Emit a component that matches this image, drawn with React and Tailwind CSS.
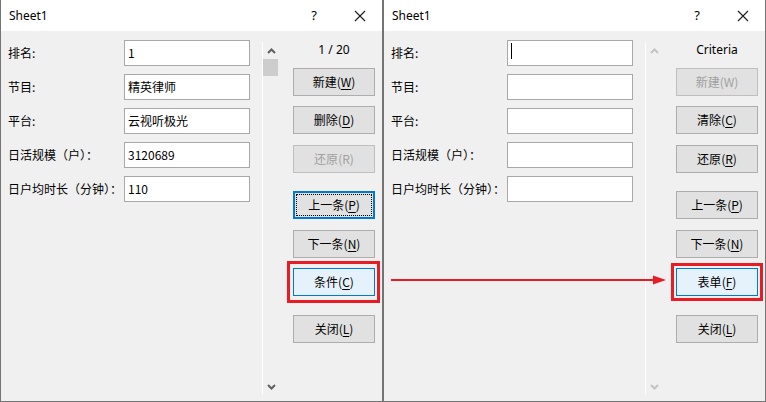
import React from "react";

const rows = [
    ["排名:", "1"],
    ["节目:", "精英律师"],
    ["平台:", "云视听极光"],
    ["日活规模（户）：", "3120689"],
    ["日户均时长（分钟）：", "110"],
];

function CloseIcon() {
    return (
        <svg width="12" height="12" viewBox="0 0 12 12">
            <path d="M1 1 L11 11 M11 1 L1 11" stroke="#1a1a1a" strokeWidth="1.1" fill="none" />
        </svg>
    );
}

function Chevron({ up, color }) {
    return (
        <svg width="9" height="6" viewBox="0 0 9 6">
            <path d={up ? "M1 5 L4.5 1.5 L8 5" : "M1 1 L4.5 4.5 L8 1"} stroke={color} strokeWidth="2" fill="none" />
        </svg>
    );
}

// one dialog button, kind = normal | disabled | focus | active
function Btn({ text, hot, kind = "normal", className = "" }) {
    let look = "border border-[#adadad] bg-[#e1e1e1] text-black";
    if (kind === "disabled") look = "border border-[#bfbfbf] bg-[#e1e1e1] text-[#a0a0a0]";
    if (kind === "focus") look = "border-2 border-[#0078d7] bg-[#e1e1e1] text-black";
    if (kind === "active") look = "border border-[#0078d7] bg-[#e5f1fb] text-black";
    return (
        <div className={"relative flex h-[28px] w-[82px] items-center justify-center text-[12px] " + look + " " + className}>
            {kind === "focus" && <span className="absolute inset-[1px] border border-dotted border-black" />}
            <span className="relative">
                {text}(
                {hot ? <span className={kind === "disabled" ? "" : "underline underline-offset-2"}>{hot}</span> : null})
            </span>
        </div>
    );
}

function Dialog({ criteria }) {
    return (
        <div className="flex h-[402px] flex-col border-x border-b border-[#747474] bg-[#f0f0f0] font-['Noto_Sans_CJK_SC',sans-serif]">
            {/* title bar */}
            <div className="flex h-[31px] items-center bg-white pl-[8px] text-[12px] text-black">
                <span className="font-['Noto_Sans','Noto_Sans_CJK_SC',sans-serif]">Sheet1</span>
                <span className="ml-auto mr-[37px] font-['Noto_Sans',sans-serif] text-[13px]">?</span>
                <span className="mr-[16px] flex items-center">
                    <CloseIcon />
                </span>
            </div>

            <div className="flex flex-1">
                {/* form */}
                <div className="flex w-[261px] flex-col gap-[8px] pt-[9px]">
                    {rows.map(([label, value], i) => (
                        <div key={label} className="flex h-[26px] items-center">
                            <div className="w-[123px] pl-[7px] text-[12px] text-black">{label}</div>
                            <div className="relative flex h-[26px] w-[126px] items-center border border-[#a8a8a8] bg-white pl-[3px] text-[12px] text-black">
                                {criteria ? "" : value}
                                {criteria && i === 0 && <span className="absolute left-[3px] top-[2px] h-[16px] w-px bg-black" />}
                            </div>
                        </div>
                    ))}
                </div>

                {/* scrollbar */}
                <div className="mb-[6px] mt-[11px] flex w-[17px] flex-col border-l border-white">
                    <div className="flex h-[17px] items-center justify-center">
                        <Chevron up color={criteria ? "#c4c4c4" : "#606060"} />
                    </div>
                    {!criteria && <div className="h-[17px] w-[15px] bg-[#cdcdcd]" />}
                    <div className="mt-auto flex h-[17px] items-center justify-center">
                        <Chevron color={criteria ? "#c4c4c4" : "#606060"} />
                    </div>
                </div>

                {/* buttons */}
                <div className="flex flex-col pl-[14px] pt-[11px]">
                    <div className="h-[16px] w-[82px] text-center font-['Noto_Sans','Noto_Sans_CJK_SC',sans-serif] text-[12px] leading-[16px] text-black">
                        {criteria ? "Criteria" : "1 / 20"}
                    </div>
                    <Btn text="新建" hot="W" kind={criteria ? "disabled" : "normal"} className="mt-[10px]" />
                    <Btn text={criteria ? "清除" : "删除"} hot={criteria ? "C" : "D"} className="mt-[10px]" />
                    <Btn text="还原" hot="R" kind={criteria ? "normal" : "disabled"} className="mt-[11px]" />
                    <Btn text="上一条" hot="P" kind={criteria ? "normal" : "focus"} className="mt-[18px]" />
                    <Btn text="下一条" hot="N" className="mt-[11px]" />
                    <div className="relative mt-[10px]">
                        <Btn text={criteria ? "表单" : "条件"} hot={criteria ? "F" : "C"} kind="active" />
                        <span
                            className={
                                criteria
                                    ? "absolute -bottom-[5px] -left-[5px] -right-[5px] -top-[5px] border-[3px] border-[#e81c24]"
                                    : "absolute -bottom-[7px] -left-[6px] -right-[5px] -top-[7px] border-[3px] border-[#e81c24]"
                            }
                        />
                    </div>
                    <Btn text="关闭" hot="L" className="mt-[19px]" />
                </div>
            </div>
        </div>
    );
}

export default function App() {
    return (
        <div className="relative flex h-[402px] w-[766px] overflow-hidden bg-[#f0f0f0]">
            <div className="w-[383px]">
                <Dialog />
            </div>
            <div className="w-[383px]">
                <Dialog criteria />
            </div>
            <svg className="absolute left-[391px] top-[274px]" width="276" height="12" viewBox="0 0 276 12">
                <line x1="0" y1="6" x2="264" y2="6" stroke="#e81c24" strokeWidth="2" />
                <polygon points="262,1.5 275,6 262,10.5" fill="#e81c24" />
            </svg>
        </div>
    );
}
